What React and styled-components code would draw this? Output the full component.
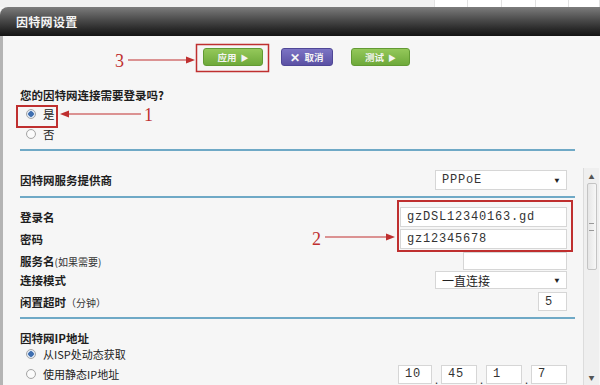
import styled, { createGlobalStyle } from 'styled-components'

const Global = createGlobalStyle`
  html, body { margin: 0; padding: 0; background: #ffffff; }
  body { font-family: "Noto Sans CJK SC", "Noto Sans", sans-serif; }
`

const Page = styled.div`
  position: relative;
  width: 600px;
  height: 385px;
  overflow: hidden;
  background: #f6f6f6;
`

const TopStrip = styled.div`
  display: flex;
  height: 7px;
  background: #ffffff;
`

const StripCell = styled.div`
  width: ${p => p.w}px;
  background: ${p => (p.grey ? '#f1f1f1' : '#ffffff')};
  border-right: 1px solid #e2e2e2;
`

const Header = styled.div`
  height: 29px;
  display: flex;
  align-items: center;
  padding-left: 16px;
  border-radius: 8px 0 0 0;
  background: linear-gradient(#7c7c7c 0%, #4a4a4a 45%, #262626 80%, #141414 100%);
  color: #f4f4f4;
  font-size: 12px;
  font-weight: 700;
  letter-spacing: 0.3px;
`

const Body = styled.div`
  display: flex;
  height: 349px;
  border-left: 3px solid #b4b4b4;
`

const Content = styled.div`
  width: 555px;
  padding-left: 17px;
  display: flex;
  flex-direction: column;
`

const ButtonRow = styled.div`
  display: flex;
  gap: 18px;
  height: 50px;
  padding: 12px 0 0 183px;
  box-sizing: border-box;
`

const Btn = styled.div`
  width: ${p => p.w}px;
  height: 18px;
  border-radius: 3px;
  display: flex;
  align-items: center;
  justify-content: center;
  gap: 4px;
  color: #f4f4f4;
  font-size: 9.5px;
  font-weight: 700;
  background: ${p =>
    p.purple
      ? 'linear-gradient(#7c74c4, #5b51a4)'
      : 'linear-gradient(#94c85a, #6ea93a)'};
  border: 1px solid ${p => (p.purple ? '#4f4796' : '#629a33')};
  box-sizing: border-box;
`

const Tri = styled.span`
  font-size: 8px;
`

const Cross = styled.span`
  font-size: 12px;
  line-height: 12px;
`

const Row = styled.div`
  display: flex;
  align-items: center;
  justify-content: space-between;
  height: ${p => p.h}px;
  margin-top: ${p => p.mt || 0}px;
  padding-right: 8px;
  flex-shrink: 0;
`

const Label = styled.span`
  font-size: 11.5px;
  font-weight: 700;
  color: #1e1e1e;
  white-space: nowrap;
`

const Note = styled.span`
  font-weight: 400;
  font-size: 10px;
  color: #333;
`

const RadioLine = styled.label`
  display: flex;
  align-items: center;
  gap: 7px;
  padding-left: 6px;
  font-size: ${p => p.fs || 11.5}px;
  color: #222;
`

const Radio = styled.span`
  width: 10px;
  height: 10px;
  border-radius: 50%;
  border: 1px solid #a6a6a6;
  background: radial-gradient(circle, ${p => (p.on ? '#3f6fb0 0 2.5px, #dfe8f4 3px' : '#fbfbfb 0 3px, #e9e9e9 5px')});
  box-sizing: border-box;
`

const Divider = styled.div`
  height: 2px;
  background: #6fa9c6;
  margin-top: ${p => p.mt}px;
  flex-shrink: 0;
`

const Field = styled.div`
  width: ${p => p.w}px;
  height: ${p => p.h || 20}px;
  background: #fff;
  border: 1px solid #d6d6d6;
  box-sizing: border-box;
  display: flex;
  align-items: center;
  justify-content: space-between;
  padding: 0 6px;
  font-family: "Liberation Mono", "Noto Sans CJK SC", monospace;
  font-size: 12px;
  letter-spacing: 0.8px;
  color: #333;
`

const CjkValue = styled.span`
  font-family: "Noto Sans CJK SC", sans-serif;
  font-size: 12px;
  letter-spacing: 0;
  color: #222;
`

const Caret = styled.span`
  font-size: 8px;
  color: #222;
`

const Stack = styled.div`
  display: flex;
  flex-direction: column;
  gap: 2px;
`

const IpGroup = styled.div`
  display: flex;
  align-items: flex-end;
  gap: 2px;
`

const Dot = styled.span`
  width: 5px;
  text-align: center;
  font-size: 11px;
  color: #333;
  line-height: 10px;
`

const ScrollCol = styled.div`
  margin-left: 8px;
  margin-top: 132px;
  width: 16px;
  height: 217px;
  background: #efefef;
  border-left: 1px solid #dcdcdc;
  display: flex;
  flex-direction: column;
  align-items: center;
  justify-content: space-between;
  box-sizing: border-box;
  padding: 6px 0 4px;
`

const Arrow = styled.span`
  font-size: 6px;
  color: #555;
  line-height: 6px;
`

const Thumb = styled.div`
  width: 10px;
  height: 87px;
  margin-top: 3px;
  background: linear-gradient(90deg, #e6e6e6, #f7f7f7);
  border: 1px solid #c4c4c4;
  border-radius: 2px;
  box-sizing: border-box;
  display: flex;
  align-items: center;
  justify-content: center;
`

const Grip = styled.div`
  width: 5px;
  height: 6px;
  border-top: 1px solid #999;
  border-bottom: 1px solid #999;
`

const Track = styled.div`
  flex: 1;
`

const Overlay = styled.svg`
  position: absolute;
  left: 0;
  top: 0;
  pointer-events: none;
`

const red = '#bf2f2f'

function Annotations () {
  return (
    <Overlay width='600' height='385'>
      <rect x='196.5' y='44.5' width='72' height='27' fill='none' stroke={red} strokeWidth='1.5' />
      <rect x='17' y='106' width='40' height='21' fill='none' stroke={red} strokeWidth='2' />
      <rect x='398' y='201' width='174' height='50' fill='none' stroke={red} strokeWidth='2' />
      <line x1='128' y1='60' x2='188' y2='60' stroke={red} strokeWidth='1.2' />
      <polygon points='195,60 186,56.5 186,63.5' fill={red} />
      <line x1='141' y1='114' x2='67' y2='114' stroke={red} strokeWidth='1.2' />
      <polygon points='60,114 69,110.5 69,117.5' fill={red} />
      <line x1='325' y1='237' x2='387' y2='237' stroke={red} strokeWidth='1.2' />
      <polygon points='395,237 386,233.5 386,240.5' fill={red} />
      <text x='115' y='67' fill={red} fontSize='18' fontFamily='Liberation Serif, serif'>3</text>
      <text x='144' y='121' fill={red} fontSize='18' fontFamily='Liberation Serif, serif'>1</text>
      <text x='312' y='245' fill={red} fontSize='18' fontFamily='Liberation Serif, serif'>2</text>
    </Overlay>
  )
}

export default function App () {
  return (
    <Page>
      <Global />
      <TopStrip>
        <StripCell w={438} grey />
        <StripCell w={33} />
        <StripCell w={33} />
        <StripCell w={33} />
        <StripCell w={33} />
        <StripCell w={30} />
      </TopStrip>
      <Header>因特网设置</Header>
      <Body>
        <Content>
          <ButtonRow>
            <Btn w={60}>应用<Tri>▶</Tri></Btn>
            <Btn w={52} purple><Cross>✕</Cross>取消</Btn>
            <Btn w={59}>测试<Tri>▶</Tri></Btn>
          </ButtonRow>
          <Row h={18}><Label>您的因特网连接需要登录吗?</Label></Row>
          <Row h={20}><RadioLine><Radio on />是</RadioLine></Row>
          <Row h={20}><RadioLine><Radio />否</RadioLine></Row>
          <Divider mt={5} />
          <Row h={20} mt={19}>
            <Label>因特网服务提供商</Label>
            <Field w={132}>PPPoE<Caret>▼</Caret></Field>
          </Row>
          <Divider mt={6} />
          <Row h={42} mt={9}>
            <Stack>
              <Row h={20}><Label>登录名</Label></Row>
              <Row h={20}><Label>密码</Label></Row>
            </Stack>
            <Stack>
              <Field w={167}>gzDSL12340163.gd</Field>
              <Field w={167}>gz12345678</Field>
            </Stack>
          </Row>
          <Row h={18} mt={3}>
            <Label>服务名<Note>(如果需要)</Note></Label>
            <Field w={104} h={18} />
          </Row>
          <Row h={18} mt={1}>
            <Label>连接模式</Label>
            <Field w={132} h={18}><CjkValue>一直连接</CjkValue><Caret>▼</Caret></Field>
          </Row>
          <Row h={19} mt={3}>
            <Label>闲置超时<Note>（分钟）</Note></Label>
            <Field w={29} h={19}>5</Field>
          </Row>
          <Divider mt={6} />
          <Row h={17} mt={10}><Label>因特网IP地址</Label></Row>
          <Row h={16}><RadioLine fs={11}><Radio on />从ISP处动态获取</RadioLine></Row>
          <Row h={20} mt={2}>
            <RadioLine fs={11}><Radio />使用静态IP地址</RadioLine>
            <IpGroup>
              <Field w={34} h={19}>10</Field><Dot>.</Dot>
              <Field w={36} h={19}>45</Field><Dot>.</Dot>
              <Field w={36} h={19}>1</Field><Dot>.</Dot>
              <Field w={36} h={19}>7</Field>
            </IpGroup>
          </Row>
        </Content>
        <ScrollCol>
          <Arrow>▲</Arrow>
          <Thumb><Grip /></Thumb>
          <Track />
          <Arrow>▼</Arrow>
        </ScrollCol>
      </Body>
      <Annotations />
    </Page>
  )
}
